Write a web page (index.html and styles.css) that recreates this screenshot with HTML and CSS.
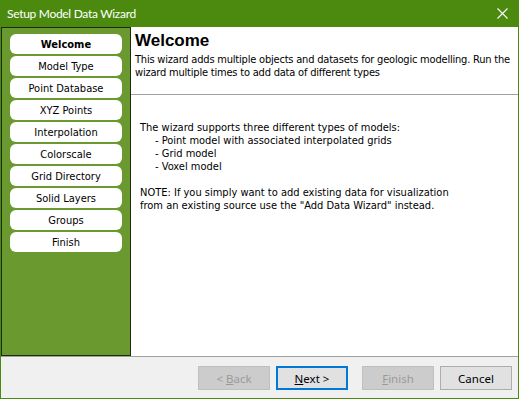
FILE: index.html
```html
<!DOCTYPE html>
<html>
<head>
<meta charset="utf-8">
<link rel="stylesheet" href="styles.css">
</head>
<body>
<div class="window">
  <div class="titlebar">
    <span class="title">Setup Model Data Wizard</span>
    <svg class="close" width="11" height="11" viewBox="0 0 11 11"><path d="M0.5 0.5 L10.5 10.5 M10.5 0.5 L0.5 10.5" stroke="#fff" stroke-width="1.1" fill="none"/></svg>
  </div>
  <div class="main">
    <div class="sidebar">
      <div class="step active">Welcome</div>
      <div class="step">Model Type</div>
      <div class="step">Point Database</div>
      <div class="step">XYZ Points</div>
      <div class="step">Interpolation</div>
      <div class="step">Colorscale</div>
      <div class="step">Grid Directory</div>
      <div class="step">Solid Layers</div>
      <div class="step">Groups</div>
      <div class="step">Finish</div>
    </div>
    <div class="content">
      <div class="header">
        <h1 class="heading">Welcome</h1>
        <p class="desc">This wizard adds multiple objects and datasets for geologic modelling. Run the<br>wizard multiple times to add data of different types</p>
      </div>
      <div class="body">
        <p class="para">The wizard supports three different types of models:</p>
        <p class="item">- Point model with associated interpolated grids</p>
        <p class="item">- Grid model</p>
        <p class="item">- Voxel model</p>
        <p class="para note">NOTE: If you simply want to add existing data for visualization<br>from an existing source use the "Add Data Wizard" instead.</p>
      </div>
    </div>
  </div>
  <div class="footer">
    <button class="btn disabled">&lt; <u>B</u>ack</button>
    <button class="btn primary"><u>N</u>ext &gt;</button>
    <button class="btn disabled gap"><u>F</u>inish</button>
    <button class="btn">Cancel</button>
  </div>
</div>
</body>
</html>
```

FILE: styles.css
```css
* { box-sizing: border-box; }
html, body { margin: 0; padding: 0; }
body {
  width: 519px;
  height: 399px;
  overflow: hidden;
  font-family: "DejaVu Sans Condensed", "DejaVu Sans", sans-serif;
  font-size: 11px;
}
.window {
  width: 519px;
  height: 399px;
  display: flex;
  flex-direction: column;
  border: 1px solid #4b8a0f;
  border-top: none;
  background: #fff;
}
.titlebar {
  height: 27px;
  flex-shrink: 0;
  margin: 0 -1px;
  background: #4b8a0f;
  display: flex;
  align-items: center;
  justify-content: space-between;
  padding: 0 11px 1px 7px;
}
.title {
  color: #fff;
  font-family: "Lato", sans-serif;
  font-size: 12px;
  letter-spacing: -0.3px;
}
.close { display: block; }
.main {
  height: 329px;
  flex-shrink: 0;
  display: flex;
}
.sidebar {
  width: 130px;
  flex-shrink: 0;
  background: #6a9a2f;
  border: 1px solid #1c2b0c;
  padding: 6px 0 0 8px;
  display: flex;
  flex-direction: column;
  gap: 2px;
}
.step {
  width: 112px;
  height: 20px;
  background: #fff;
  border-radius: 6px;
  display: flex;
  align-items: center;
  justify-content: center;
  color: #000;
}
.step.active { font-weight: bold; }
.content {
  flex: 1;
  min-width: 0;
  overflow: hidden;
  display: flex;
  flex-direction: column;
}
.header {
  height: 68px;
  flex-shrink: 0;
  border-bottom: 1px solid #a0a0a0;
  padding: 3px 4px 0 4px;
}
.heading {
  margin: 0;
  font-family: "Liberation Sans", sans-serif;
  font-size: 17px;
  line-height: 22px;
  font-weight: bold;
}
.desc {
  margin: 1px 0 0;
  line-height: 13px;
  white-space: nowrap;
  letter-spacing: -0.2px;
}
.body {
  padding: 26px 0 0 9px;
}
.body p { margin: 0; line-height: 13px; white-space: nowrap; }
.item { padding-left: 15px; }
.note { margin-top: 13px !important; }
.footer {
  flex: 1;
  border-top: 1px solid #a0a0a0;
  background: #f0f0f0;
  display: flex;
  align-items: flex-start;
  padding: 9px 0 0 197px;
}
.btn {
  width: 72px;
  height: 24px;
  margin-right: 6px;
  background: #e1e1e1;
  border: 1px solid #adadad;
  font-family: "Noto Sans", sans-serif;
  font-size: 11.5px;
  color: #000;
  padding: 0;
}
.btn.disabled {
  background: #cccccc;
  border-color: #bfbfbf;
  color: #9a9a9a;
}
.btn.primary { border: 2px solid #0078d7; }
.btn.gap { margin-left: 8px; }
```
